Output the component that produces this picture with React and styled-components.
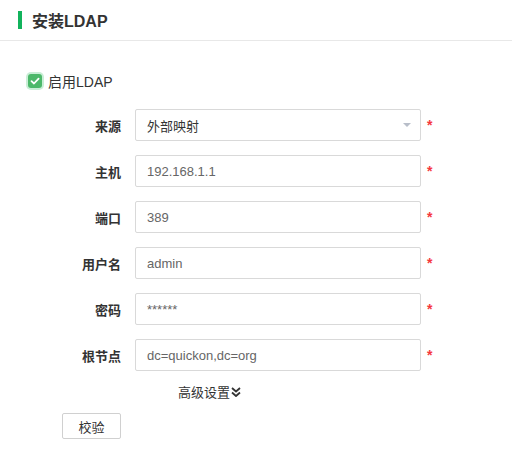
import styled, { createGlobalStyle } from 'styled-components'
import React, { useState } from 'react'

const GlobalStyle = createGlobalStyle`
  body {
    margin: 0;
    background: #fff;
    font-family: "Liberation Sans", "Noto Sans CJK SC", sans-serif;
    color: #333;
  }
`

const Page = styled.div`
  width: 512px;
  height: 460px;
  overflow: hidden;
`

const Header = styled.div`
  display: flex;
  align-items: center;
  height: 41px;
  padding-left: 18px;
  border-bottom: 1px solid #e8e8e8;
  box-sizing: border-box;
`

const Bar = styled.span`
  width: 4px;
  height: 18px;
  background: #12b35c;
  margin-right: 10px;
`

const Title = styled.h1`
  margin: 0;
  font-size: 16px;
  font-weight: bold;
  color: #333;
`

const Body = styled.div`
  padding: 30px 0 0 26px;
`

const CheckRow = styled.label`
  display: flex;
  align-items: center;
  font-size: 14px;
  color: #333;
  margin-bottom: 18px;
`

const CheckBox = styled.span`
  display: flex;
  align-items: center;
  justify-content: center;
  width: 14px;
  height: 14px;
  border-radius: 3px;
  background: #4cb86a;
  box-shadow: 0 0 0 2px #c9eed6;
  margin: 0 6px 0 2px;
`

const Form = styled.div`
  display: flex;
  flex-direction: column;
  gap: 14px;
`

const Row = styled.div`
  display: flex;
  align-items: center;
`

const Label = styled.span`
  width: 95px;
  text-align: right;
  font-size: 13px;
  font-weight: bold;
  color: #333;
  margin-right: 14px;
`

const Field = styled.div`
  position: relative;
  display: flex;
  align-items: center;
  width: 286px;
  height: 32px;
  box-sizing: border-box;
  border: 1px solid #d9d9d9;
  border-radius: 2px;
  padding: 0 11px;
  font-size: 13px;
  color: ${(p) => (p.$dark ? '#333' : '#666')};
`

const Caret = styled.span`
  position: absolute;
  right: 9px;
  top: 13px;
  width: 0;
  height: 0;
  border-left: 4px solid transparent;
  border-right: 4px solid transparent;
  border-top: 4px solid #b8bec9;
`

const Star = styled.span`
  color: #f5373d;
  font-size: 14px;
  margin-left: 6px;
  font-weight: bold;
`

const More = styled.div`
  display: flex;
  align-items: center;
  margin: 11px 0 0 152px;
  font-size: 13px;
  color: #333;
`

const Button = styled.button`
  margin: 12px 0 0 36px;
  width: 59px;
  height: 26px;
  border: 1px solid #d0d0d0;
  border-radius: 2px;
  background: #fff;
  font-family: inherit;
  font-size: 13px;
  color: #333;
`

const fields = [
  { label: '来源', value: '外部映射', select: true },
  { label: '主机', value: '192.168.1.1' },
  { label: '端口', value: '389' },
  { label: '用户名', value: 'admin' },
  { label: '密码', value: '******' },
  { label: '根节点', value: 'dc=quickon,dc=org' },
]

const App = () => {
  const [enabled] = useState(true)

  return (
    <Page>
      <GlobalStyle />
      <Header>
        <Bar />
        <Title>安装LDAP</Title>
      </Header>
      <Body>
        <CheckRow>
          <CheckBox>
            {enabled && (
              <svg width="10" height="10" viewBox="0 0 10 10">
                <path d="M1.5 5.2 L4 7.5 L8.6 2.6" fill="none" stroke="#fff" strokeWidth="1.8" strokeLinecap="round" strokeLinejoin="round" />
              </svg>
            )}
          </CheckBox>
          启用LDAP
        </CheckRow>
        <Form>
          {fields.map((f) => (
            <Row key={f.label}>
              <Label>{f.label}</Label>
              <Field $dark={f.select}>
                {f.value}
                {f.select && <Caret />}
              </Field>
              <Star>*</Star>
            </Row>
          ))}
        </Form>
        <More>
          高级设置
          <svg width="12" height="12" viewBox="0 0 12 12">
            <path d="M2 2 L6 5.5 L10 2 M2 6.5 L6 10 L10 6.5" fill="none" stroke="#333" strokeWidth="1.8" strokeLinejoin="round" />
          </svg>
        </More>
        <Button>校验</Button>
      </Body>
    </Page>
  )
}

export default App
